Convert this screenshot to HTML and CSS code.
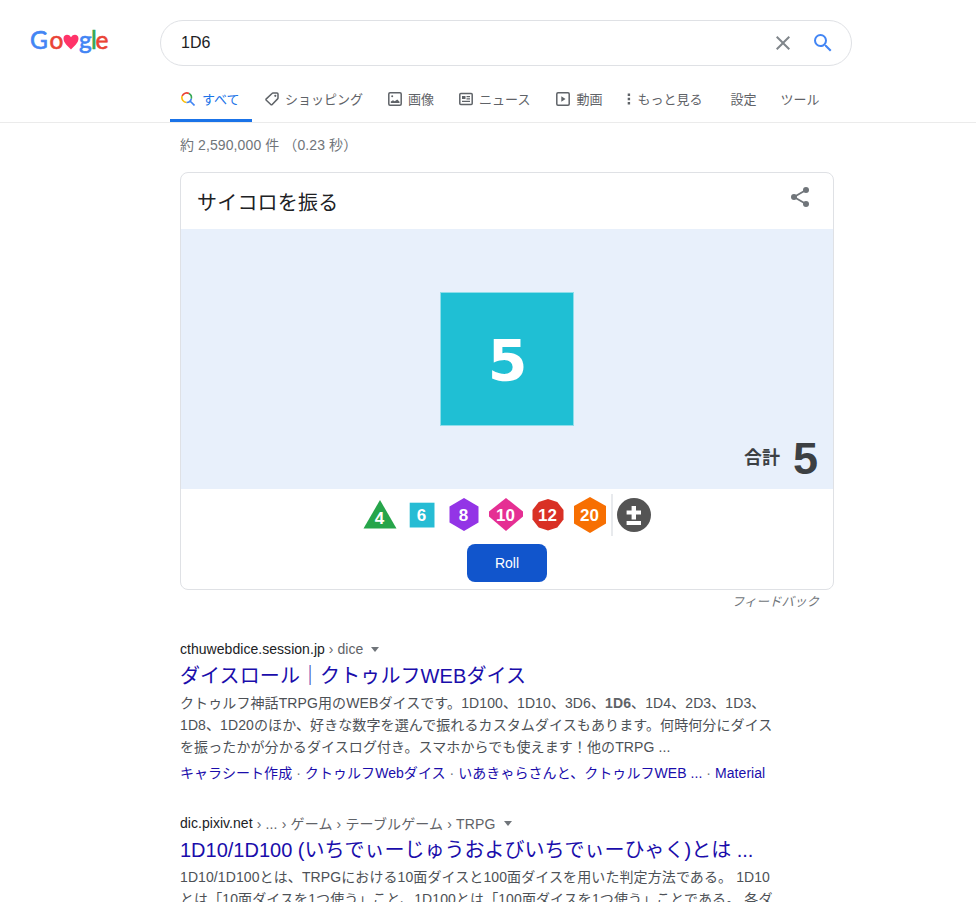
FILE: index.html
```
<!DOCTYPE html>
<html lang="ja">
<head>
  <meta charset="UTF-8">
  <title>1D6 - Google 検索</title>
  <meta name="viewport" content="width=device-width, initial-scale=1.0">
  <link rel="stylesheet" href="styles.css">
</head>
<body>
  <header class="header">
    <div class="search-row">
      <a class="logo" href="#">
        <svg width="80" height="34" viewBox="0 0 80 34">
          <g class="logo-text">
            <text x="-1" y="24" fill="#4285f4" stroke="#4285f4">G</text>
            <text x="18.5" y="24" fill="#ea4335" stroke="#ea4335">o</text>
            <text x="48" y="24" fill="#4285f4" stroke="#4285f4">g</text>
            <text x="60" y="24" fill="#34a853" stroke="#34a853">l</text>
            <text x="64.500" y="24" fill="#ea4335" stroke="#ea4335">e</text>
          </g>
          <path fill="#ff3369" d="M40 24.500C37 21 32.500 18 32.500 13.500C32.500 9 38 8.500 40 12.200C42 8.500 47.500 9 47.500 13.500C47.500 18 43 21 40 24.500z"/>
        </svg>
      </a>
      <form class="search-box">
        <input class="search-input" type="text" value="1D6">
        <svg class="icon-clear" width="24" height="24" viewBox="0 0 24 24"><path fill="#80868b" d="M19 6.410L17.590 5 12 10.590 6.410 5 5 6.410 10.590 12 5 17.590 6.410 19 12 13.410 17.590 19 19 17.590 13.410 12z"/></svg>
        <svg class="icon-search" width="24" height="24" viewBox="0 0 24 24"><path fill="#4285f4" d="M15.500 14h-.79l-.28-.27A6.471 6.471 0 0 0 16 9.500 6.500 6.500 0 1 0 9.500 16c1.610 0 3.090-.59 4.230-1.570l.27.28v.79l5 4.990L20.490 19l-4.990-5zm-6 0C7.010 14 5 11.990 5 9.500S7.010 5 9.500 5 14 7.010 14 9.500 11.990 14 9.500 14z"/></svg>
      </form>
    </div>
    <nav class="tabs">
      <a class="tab active" href="#">
        <svg width="14" height="14" viewBox="0 0 14 14" fill="none" stroke-width="1.600">
          <path stroke="#ea4335" d="M1.200 4A4.800 4.800 0 0 1 8 1.500"/>
          <path stroke="#34a853" d="M8 1.500A4.800 4.800 0 0 1 10.300 6.800"/>
          <path stroke="#fbbc04" d="M1.200 4A4.800 4.800 0 0 0 5.600 10.500"/>
          <path stroke="#4285f4" d="M5.600 10.500A4.800 4.800 0 0 0 10.300 6.800M9 9L13.500 13.500"/>
        </svg>
        <span>すべて</span>
      </a>
      <a class="tab tab-shopping" href="#">
        <svg width="14" height="14" viewBox="0 0 14 14" fill="none" stroke="#5f6368" stroke-width="1.500"><path stroke-linejoin="round" d="M8 1.100h4q1 0 1 1v3.800q0 .6-.4 1L7.200 12.500q-.7.700-1.400 0L1.300 8.300q-.7-.7 0-1.400L7 1.500q.4-.4 1-.4z"/><circle cx="10.300" cy="3.800" r="1.100" fill="#5f6368" stroke="none"/></svg>
        <span>ショッピング</span>
      </a>
      <a class="tab tab-images" href="#">
        <svg width="14" height="14" viewBox="0 0 14 14"><rect x=".8" y=".8" width="12.400" height="12.400" rx="1.200" fill="none" stroke="#5f6368" stroke-width="1.500"/><path fill="#5f6368" d="M2.800 11V9.500L5 8.300l1.700 1L9.300 7.500l2.200 2.300V11z"/><circle cx="4.200" cy="4.200" r="1" fill="#5f6368"/></svg>
        <span>画像</span>
      </a>
      <a class="tab tab-news" href="#">
        <svg width="14" height="14" viewBox="0 0 14 14"><rect x=".8" y="1.500" width="12.400" height="11" rx="1" fill="none" stroke="#5f6368" stroke-width="1.500"/><path fill="#5f6368" d="M3 4h3.500v3H3zM7.500 4H11v1.200H7.500zM7.500 6.200H11v1.200H7.500zM3 8.800h8V10H3z"/></svg>
        <span>ニュース</span>
      </a>
      <a class="tab tab-videos" href="#">
        <svg width="14" height="14" viewBox="0 0 14 14"><rect x=".8" y=".8" width="12.400" height="12.400" rx="1.200" fill="none" stroke="#5f6368" stroke-width="1.500"/><path fill="#5f6368" d="M5.300 4.200v5.600L9.500 7z"/></svg>
        <span>動画</span>
      </a>
      <a class="tab tab-more" href="#">
        <svg width="4" height="14" viewBox="0 0 4 14" fill="#5f6368"><path d="M.7 1.500h2.400v2.400H.7zM.7 5.800h2.400v2.400H.7zM.7 10h2.400v2.400H.7z"/></svg>
        <span>もっと見る</span>
      </a>
      <a class="tab tab-settings" href="#">設定</a>
      <a class="tab tab-tools" href="#">ツール</a>
    </nav>
  </header>

  <main class="content">
    <div class="result-stats">約 2,590,000 件 <span class="time">（0.23 秒）</span></div>

    <!-- Dice roller -->
    <section class="dice-card">
      <div class="dice-header">
        <h2>サイコロを振る</h2>
        <svg width="24" height="24" viewBox="0 0 24 24" fill="#70757a"><path stroke="#70757a" stroke-width="1.800" fill="none" d="M18 5L6 12l12 7"/><circle cx="18" cy="5" r="3"/><circle cx="6" cy="12" r="3"/><circle cx="18" cy="19" r="3"/></svg>
      </div>
      <div class="dice-board">
        <div class="die">5</div>
        <div class="total"><span class="total-label">合計</span><span class="total-value">5</span></div>
      </div>
      <div class="dice-picker">
        <svg width="42" height="42" viewBox="0 0 42 42"><path fill="#26a54a" d="M21 6l16.500 28.500h-33z"/><text x="20.500" y="30">4</text></svg>
        <svg width="42" height="42" viewBox="0 0 42 42"><path fill="#26bcd4" d="M8.700 8.700h24.800v24.800H8.700z"/><text x="20.500" y="27">6</text></svg>
        <svg width="42" height="42" viewBox="0 0 42 42"><path fill="#9334e6" d="M21 4l14.500 8.500v16L21 37 6.500 28.500v-16z"/><text x="20.500" y="27">8</text></svg>
        <svg width="42" height="42" viewBox="0 0 42 42"><path fill="#e52f93" d="M21 4l17 13.500v5L21 37 4 22.500v-5z"/><text x="20.500" y="27">10</text></svg>
        <svg width="42" height="42" viewBox="0 0 42 42"><path fill="#d93025" d="M21 5l9.300 3L36.500 15.900v9.700l-6.200 7.800-9.300 3-9.300-3L5.500 25.600v-9.700L11.700 8z"/><text x="20.500" y="27">12</text></svg>
        <svg width="42" height="42" viewBox="0 0 42 42"><path fill="#f76f02" d="M21 3l16 9v17.500L21 39 5 29.500V12z"/><text x="20.500" y="27">20</text></svg>
        <span class="divider"></span>
        <svg class="modifier" width="34" height="34" viewBox="0 0 34 34"><circle cx="17" cy="17" r="17" fill="#545454"/><path fill="#fff" d="M14.600 8h4.400v4.600h5v4h-5v5h-4.400v-5h-5v-4h5zM9.600 23h14.400v4H9.600z"/></svg>
      </div>
      <button class="roll-btn" type="button">Roll</button>
    </section>
    <div class="feedback">フィードバック</div>

    <!-- Results -->
    <article class="result">
      <div class="cite">cthuwebdice.session.jp <span>› dice</span><i class="caret"></i></div>
      <h3 class="wide"><a href="#">ダイスロール｜クトゥルフWEBダイス</a></h3>
      <p class="snippet">クトゥルフ神話TRPG用のWEBダイスです。1D100、1D10、3D6、<b>1D6</b>、1D4、2D3、1D3、<br>1D8、1D20のほか、好きな数字を選んで振れるカスタムダイスもあります。何時何分にダイス<br>を振ったかが分かるダイスログ付き。スマホからでも使えます！他のTRPG ...</p>
      <div class="sitelinks"><a href="#">キャラシート作成</a> · <a href="#">クトゥルフWebダイス</a> · <a href="#">いあきゃらさんと、クトゥルフWEB ...</a> · <a href="#">Material</a></div>
    </article>

    <article class="result">
      <div class="cite">dic.pixiv.net <span class="path">› ... › ゲーム › テーブルゲーム › TRPG</span><i class="caret"></i></div>
      <h3><a href="#">1D10/1D100 (いちでぃーじゅうおよびいちでぃーひゃく)とは ...</a></h3>
      <p class="snippet">1D10/1D100とは、TRPGにおける10面ダイスと100面ダイスを用いた判定方法である。 1D10<br>とは「10面ダイスを1つ使う」こと、1D100とは「100面ダイスを1つ使う」ことである。 各ダ</p>
    </article>
  </main>
</body>
</html>
```
FILE: styles.css
```
* {
  box-sizing: border-box;
}
body {
  margin: 0;
  height: 902px;
  overflow: hidden;
  background: #fff;
  color: #202124;
  font-family: "Liberation Sans", Arial, "Noto Sans CJK JP", sans-serif;
  font-size: 14px;
}
a {
  text-decoration: none;
}
svg {
  display: block;
  flex: none;
}
.header {
  height: 123px;
  border-bottom: 1px solid #ebebeb;
}
.search-row {
  display: flex;
  padding-top: 20px;
}
.logo {
  width: 129px;
  margin-left: 31px;
  padding-top: 5px;
}
.logo svg {
  overflow: visible;
}
.logo-text {
  font-family: Lato, sans-serif;
  font-size: 24.5px;
  stroke-width: .6px;
}
.search-box {
  display: flex;
  align-items: center;
  width: 692px;
  height: 46px;
  border: 1px solid #dfe1e5;
  border-radius: 23px;
  padding: 0 16px 0 20px;
}
.search-input {
  flex: 1;
  border: none;
  outline: none;
  padding: 0;
  color: #202124;
  font: 16px "Liberation Sans", Arial, sans-serif;
}
.icon-clear {
  margin-right: 16px;
}
.tabs {
  display: flex;
  height: 56px;
  padding-left: 170px;
}
.tab {
  display: flex;
  align-items: center;
  gap: 6px;
  height: 56px;
  padding-top: 9px;
  color: #5f6368;
  font-size: 13px;
  white-space: nowrap;
}
.tab.active {
  width: 82px;
  padding: 12px 0 0 11px;
  gap: 7px;
  color: #1a73e8;
  border-bottom: 3px solid #1a73e8;
}
.tab-shopping { margin-left: 13px; }
.tab-images { margin-left: 25px; }
.tab-news { margin-left: 25px; }
.tab-videos { margin-left: 26px; }
.tab-more { margin-left: 25px; }
.tab-settings { margin-left: 28px; }
.tab-tools { margin-left: 24px; }

.content {
  width: 654px;
  margin-left: 180px;
}
.result-stats {
  height: 49px;
  line-height: 44px;
  letter-spacing: .1px;
  color: #70757a;
}
.dice-card {
  height: 418px;
  border: 1px solid #dfe1e5;
  border-radius: 8px;
}
.dice-header {
  display: flex;
  justify-content: space-between;
  height: 56px;
  padding: 12px 21px 0 16px;
}
.dice-header h2 {
  margin: 0;
  font-size: 20px;
  font-weight: 400;
  letter-spacing: .2px;
  line-height: 36px;
}
.dice-board {
  display: flex;
  flex-direction: column;
  align-items: center;
  height: 260px;
  padding-top: 63px;
  background: #e8f0fb;
}
.die {
  width: 134px;
  height: 134px;
  padding-left: 1px;
  border: 1px solid #8edeea;
  background: #1fbfd4;
  color: #fff;
  font: bold 57px/136px "DejaVu Sans", sans-serif;
  text-align: center;
}
.total {
  display: flex;
  align-items: center;
  align-self: flex-end;
  gap: 13px;
  height: 64px;
  padding-right: 15px;
  color: #3c4043;
  font-weight: bold;
}
.total-label {
  padding-bottom: 4px;
  font-size: 18px;
}
.total-value {
  padding-top: 2px;
  font-size: 45px;
}
.dice-picker {
  display: flex;
  align-items: center;
  height: 52px;
  padding-left: 178px;
}
.dice-picker text {
  fill: #fff;
  font-size: 17px;
  font-weight: bold;
  text-anchor: middle;
}
.divider {
  width: 2px;
  height: 42px;
  margin-right: 4px;
  background: #e8eaed;
}
.roll-btn {
  display: block;
  width: 80px;
  height: 38px;
  margin: 3px auto 0;
  border: none;
  border-radius: 8px;
  background: #1155cc;
  color: #fff;
  font: 14px "Liberation Sans", Arial, sans-serif;
}
.feedback {
  height: 48px;
  padding-right: 15px;
  color: #70757a;
  font-size: 12.5px;
  font-style: italic;
  line-height: 24px;
  text-align: right;
}
.result {
  height: 174px;
  white-space: nowrap;
}
/* last result continues below the fold */
.result:last-child {
  height: auto;
}
.cite {
  display: flex;
  align-items: center;
  height: 22px;
  gap: 4px;
  letter-spacing: .04px;
}
.cite span {
  color: #5f6368;
}
.cite .path {
  letter-spacing: .15px;
}
.caret {
  margin-left: 4px;
  border: 4px solid transparent;
  border-top: 5px solid #70757a;
  border-bottom: 0;
}
.result h3 {
  height: 32px;
  margin: 0;
  font-size: 20px;
  font-weight: 400;
  line-height: 32px;
}
.result h3.wide {
  letter-spacing: .1px;
}
.result a {
  color: #1a0dab;
}
.snippet {
  margin: 0;
  color: #4d5156;
  letter-spacing: .1px;
  line-height: 22px;
}
.snippet b {
  color: #5f6368;
}
.sitelinks {
  color: #70757a;
  letter-spacing: .06px;
  line-height: 30px;
}
```
